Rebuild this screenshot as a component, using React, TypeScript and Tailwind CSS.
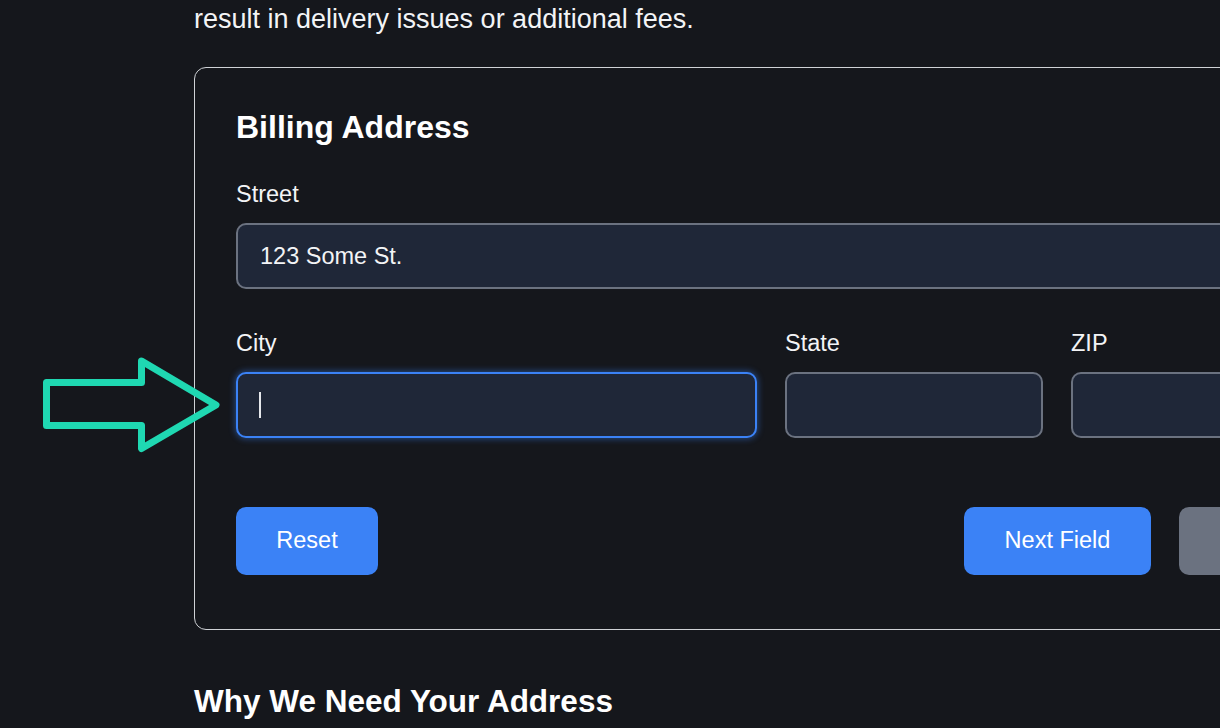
import { useState } from 'react';

const font = { fontFamily: '"Liberation Sans", Arial, sans-serif' };

function Field({ label, value, focused, className }: { label: string; value?: string; focused?: boolean; className?: string }) {
  return (
    <div className={`flex flex-col gap-3 ${className ?? ''}`}>
      <label className="text-[23.5px] leading-[33px] text-[#f3f4f6]">{label}</label>
      <div className="relative">
        <input
          readOnly
          value={value ?? ''}
          className={`w-full h-[66px] rounded-[10px] px-[22px] text-[23.5px] text-[#f3f4f6] bg-[#1f2738] outline-none border-2 ${
            focused ? 'border-[#3b82f6] shadow-[0_0_6px_1px_rgba(59,130,246,0.45)]' : 'border-[#6b7280]'
          }`}
          style={font}
        />
        {/* fake caret so the screenshot doesn't depend on blink timing */}
        {focused && <span className="absolute left-[23px] top-[20px] h-[26px] w-[2px] bg-[#e5e7eb]" />}
      </div>
    </div>
  );
}

export default function App() {
  const [street] = useState('123 Some St.');

  return (
    <div className="relative w-[1220px] h-[728px] overflow-hidden bg-[#15171c] text-white" style={font}>
      <div className="pl-[194px] w-[1420px]">
        <p className="text-[27px] leading-[36px] mt-[1px] text-[#f3f4f6]">
          result in delivery issues or additional fees.
        </p>

        {/* Billing form card */}
        <div className="mt-[30px] w-[1177px] rounded-xl border border-[#cfd2d6] pt-[40px] px-[41px] pb-[54px]">
          <h2 className="text-[32px] leading-[38px] font-bold">Billing Address</h2>

          <Field label="Street" value={street} className="mt-[32px]" />

          <div className="mt-[38px] flex gap-[28px]">
            <Field label="City" focused className="w-[521px]" />
            <Field label="State" className="w-[258px]" />
            <Field label="ZIP" className="w-[258px]" />
          </div>

          <div className="mt-[69px] flex items-center justify-between">
            <button className="h-[68px] w-[142px] rounded-[10px] bg-[#3b82f6] text-[23.5px] text-white">Reset</button>
            <div className="flex gap-[28px]">
              <button className="h-[68px] w-[187px] rounded-[10px] bg-[#3b82f6] text-[23.5px] text-white">Next Field</button>
              {/* submit button sits mostly off-screen, its label isn't visible */}
              <button className="h-[68px] w-[150px] rounded-[10px] bg-[#6b7280]" aria-label="Submit" />
            </div>
          </div>
        </div>

        <h2 className="mt-[52px] text-[31.5px] leading-[38px] font-bold">Why We Need Your Address</h2>
      </div>

      {/* annotation arrow pointing at the City field */}
      <svg className="absolute inset-0 pointer-events-none" width="1220" height="728" viewBox="0 0 1220 728">
        <path
          d="M46.5 382.5 H141.5 V361 L216 405 L141.5 448.5 V425.5 H46.5 Z"
          fill="none"
          stroke="#1fd8b2"
          strokeWidth="7"
          strokeLinejoin="round"
        />
      </svg>
    </div>
  );
}
